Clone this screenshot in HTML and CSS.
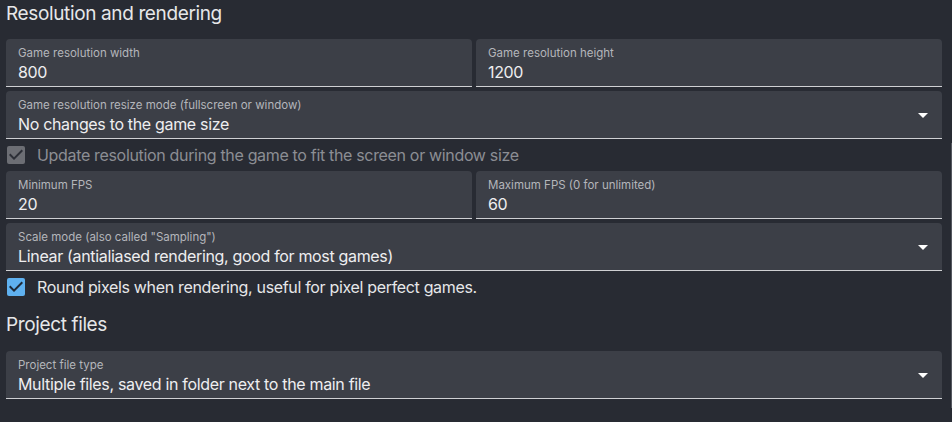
FILE: index.html
```html
<!DOCTYPE html>
<html>
<head>
<meta charset="utf-8">
<link rel="stylesheet" href="styles.css">
</head>
<body>
<div class="page">
  <h2 class="heading first">Resolution and rendering</h2>
  <div class="row">
    <div class="field"><div class="label">Game resolution width</div><div class="value">800</div></div>
    <div class="field"><div class="label">Game resolution height</div><div class="value">1200</div></div>
  </div>
  <div class="field select"><div class="label">Game resolution resize mode (fullscreen or window)</div><div class="value">No changes to the game size</div>
    <svg class="arrow" viewBox="0 0 24 24" width="24" height="24"><path d="M7 10l5 5 5-5z" fill="#ffffff"/></svg>
  </div>
  <div class="check disabled">
    <svg class="box" viewBox="0 0 24 24" width="24" height="24"><rect x="3" y="3" width="18" height="18" rx="2" fill="#6c6e74"/><path d="M10 17l-5-5 1.41-1.41L10 14.17l7.59-7.59L19 8l-9 9z" fill="#2c2f37"/></svg>
    <span class="check-text">Update resolution during the game to fit the screen or window size</span>
  </div>
  <div class="row">
    <div class="field"><div class="label">Minimum FPS</div><div class="value">20</div></div>
    <div class="field"><div class="label">Maximum FPS (0 for unlimited)</div><div class="value">60</div></div>
  </div>
  <div class="field select"><div class="label">Scale mode (also called "Sampling")</div><div class="value">Linear (antialiased rendering, good for most games)</div>
    <svg class="arrow" viewBox="0 0 24 24" width="24" height="24"><path d="M7 10l5 5 5-5z" fill="#ffffff"/></svg>
  </div>
  <div class="check">
    <svg class="box" viewBox="0 0 24 24" width="24" height="24"><rect x="3" y="3" width="18" height="18" rx="2" fill="#5fb1f0"/><path d="M10 17l-5-5 1.41-1.41L10 14.17l7.59-7.59L19 8l-9 9z" fill="#1f2a38"/></svg>
    <span class="check-text">Round pixels when rendering, useful for pixel perfect games.</span>
  </div>
  <h2 class="heading">Project files</h2>
  <div class="field select"><div class="label">Project file type</div><div class="value">Multiple files, saved in folder next to the main file</div>
    <svg class="arrow" viewBox="0 0 24 24" width="24" height="24"><path d="M7 10l5 5 5-5z" fill="#ffffff"/></svg>
  </div>
</div>
<div class="scrollbar"></div>
</body>
</html>
```
FILE: styles.css
```css
html, body {
  margin: 0;
  padding: 0;
  background: #282b33;
  height: 100%;
  overflow: hidden;
}
body {
  font-family: Inter, "Noto Sans", Roboto, sans-serif;
  color: #e8e8ea;
  position: relative;
}
.page {
  padding: 0 10px 0 6px;
  display: flex;
  flex-direction: column;
  gap: 4px;
}
.heading {
  margin: 0;
  font-size: 19px;
  font-weight: 400;
  letter-spacing: -0.37px;
  line-height: 24px;
  color: #e6e7e9;
  height: 44px;
  display: flex;
  align-items: center;
  box-sizing: border-box;
}
.heading.first {
  height: 35px;
  align-items: flex-start;
  padding-top: 2px;
}
.row {
  display: grid;
  grid-template-columns: 1fr 1fr;
  gap: 4px;
}
.field {
  position: relative;
  background: #3c3f47;
  border-radius: 4px 4px 0 0;
  border-bottom: 1px solid #cfd0d3;
  height: 48px;
  box-sizing: border-box;
  padding: 7px 12px 0;
}
.label {
  font-size: 11.5px;
  line-height: 14px;
  color: #b4b6bb;
  white-space: nowrap;
}
.value {
  font-size: 16px;
  letter-spacing: -0.33px;
  line-height: 20px;
  margin-top: 2px;
  color: #eeeef0;
  white-space: nowrap;
}
.arrow {
  position: absolute;
  right: 7px;
  top: 12px;
}
.check {
  height: 24px;
  display: flex;
  align-items: center;
  gap: 9px;
}
.box {
  margin-left: -2px;
  flex: none;
}
.check-text {
  font-size: 16px;
  letter-spacing: -0.33px;
  color: #e6e7e9;
  white-space: nowrap;
}
.check.disabled .check-text {
  color: #8c8e94;
}
.scrollbar {
  position: absolute;
  left: 951px;
  top: 143px;
  width: 1px;
  height: 265px;
  background: #555860;
}
```
